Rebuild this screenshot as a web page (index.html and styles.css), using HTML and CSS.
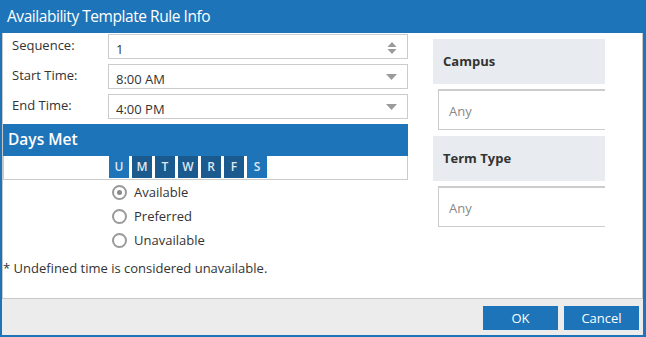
FILE: index.html
```html
<!DOCTYPE html>
<html>
<head>
<meta charset="utf-8">
<link rel="stylesheet" href="styles.css">
</head>
<body>
<div class="dialog">
  <div class="titlebar">Availability Template Rule Info</div>
  <div class="content">
    <div class="left">
      <div class="form">
        <label class="lbl">Sequence:</label>
        <div class="field">
          <span class="val">1</span>
          <svg class="spin" width="10" height="14" viewBox="0 0 10 14"><path d="M5 1 L9.5 6 L0.5 6 Z" fill="#9a9a9a"/><path d="M5 13 L9.5 8 L0.5 8 Z" fill="#9a9a9a"/></svg>
        </div>
        <label class="lbl">Start Time:</label>
        <div class="field">
          <span class="val">8:00 AM</span>
          <svg class="caret" width="11" height="6" viewBox="0 0 11 6"><path d="M0 0 L11 0 L5.5 6 Z" fill="#9a9a9a"/></svg>
        </div>
        <label class="lbl">End Time:</label>
        <div class="field">
          <span class="val">4:00 PM</span>
          <svg class="caret" width="11" height="6" viewBox="0 0 11 6"><path d="M0 0 L11 0 L5.5 6 Z" fill="#9a9a9a"/></svg>
        </div>
      </div>
      <div class="days-head">Days Met</div>
      <div class="days-row">
        <span class="day light">U</span>
        <span class="day">M</span>
        <span class="day">T</span>
        <span class="day">W</span>
        <span class="day">R</span>
        <span class="day">F</span>
        <span class="day light">S</span>
      </div>
      <div class="radios">
        <div class="radio"><span class="circle checked"></span>Available</div>
        <div class="radio"><span class="circle"></span>Preferred</div>
        <div class="radio"><span class="circle"></span>Unavailable</div>
      </div>
      <div class="note">* Undefined time is considered unavailable.</div>
    </div>
    <div class="right">
      <div class="inner">
        <div class="sec-head">Campus</div>
        <div class="sec-input">Any</div>
        <div class="sec-head">Term Type</div>
        <div class="sec-input">Any</div>
      </div>
    </div>
  </div>
  <div class="footer">
    <button class="btn">OK</button>
    <button class="btn">Cancel</button>
  </div>
</div>
</body>
</html>
```

FILE: styles.css
```css
html, body {
  margin: 0;
  padding: 0;
  background: #ffffff;
}
body {
  font-family: "Open Sans", "DejaVu Sans", sans-serif;
  font-size: 13px;
  color: #333333;
}
.dialog {
  width: 646px;
  height: 337px;
  box-sizing: border-box;
  background: #1e74b8;
  padding: 0 3px 2px 2px;
  display: flex;
  flex-direction: column;
}
.titlebar {
  height: 33px;
  line-height: 33px;
  color: #ffffff;
  font-size: 15.5px;
  letter-spacing: -0.45px;
  padding-left: 5px;
  flex: none;
}
.content {
  height: 266px;
  box-sizing: border-box;
  background: #ffffff;
  border: 1px solid #c8c8c8;
  border-top: none;
  display: flex;
  flex: none;
}
.left {
  width: 405px;
  flex: none;
}
.form {
  display: grid;
  grid-template-columns: 105px 300px;
  row-gap: 5px;
  padding-top: 1px;
}
.lbl {
  padding-left: 9px;
  line-height: 23px;
}
.field {
  height: 25px;
  box-sizing: border-box;
  border: 1px solid #cccccc;
  padding: 0 10px 0 7px;
  display: flex;
  justify-content: space-between;
  align-items: center;
}
.val {
  padding-top: 5px;
  line-height: 18px;
}
.field .spin {
  margin-top: 2px;
}
.days-head {
  margin-top: 5px;
  height: 32px;
  line-height: 31px;
  background: #1e74b8;
  color: #ffffff;
  font-size: 15.5px;
  font-weight: 600;
  padding-left: 5px;
}
.days-row {
  height: 24px;
  box-sizing: border-box;
  border: 1px solid #cccccc;
  border-top: none;
  display: flex;
  gap: 3px;
  padding-left: 105px;
}
.day {
  width: 20px;
  height: 22px;
  background: #1a5a8e;
  color: #dfe8f1;
  font-size: 12px;
  font-weight: 600;
  text-align: center;
  line-height: 22px;
}
.day.light {
  background: #1e74b8;
}
.radios {
  padding-left: 109px;
}
.radio {
  height: 24px;
  display: flex;
  align-items: center;
  gap: 7px;
}
.circle {
  width: 15px;
  height: 15px;
  box-sizing: border-box;
  border: 2px solid #9a9a9a;
  border-radius: 50%;
  display: flex;
  align-items: center;
  justify-content: center;
}
.circle.checked::after {
  content: "";
  width: 5px;
  height: 5px;
  border-radius: 50%;
  background: #8a8a8a;
}
.note {
  margin-top: 8px;
  line-height: 17px;
}
.right {
  margin-left: 25px;
  width: 172px;
  overflow: hidden;
  padding-top: 6px;
  flex: none;
}
.inner {
  width: 220px;
}
.sec-head {
  height: 45px;
  line-height: 45px;
  background: #e8ecf0;
  font-weight: 700;
  padding-left: 10px;
}
.sec-input {
  margin: 5px 0 6px 5px;
  height: 41px;
  box-sizing: border-box;
  border: 1px solid #cccccc;
  border-top: 2px solid #cccccc;
  padding-left: 10px;
  line-height: 40px;
  color: #888888;
}
.footer {
  height: 36px;
  background: #ececec;
  display: flex;
  justify-content: flex-end;
  gap: 6px;
  padding: 7px 4px 0 0;
  box-sizing: border-box;
  flex: none;
}
.btn {
  width: 75px;
  height: 24px;
  border: none;
  background: #1e74b8;
  color: #ffffff;
  font-family: "Open Sans", "DejaVu Sans", sans-serif;
  font-size: 13px;
  padding: 0;
}
```
